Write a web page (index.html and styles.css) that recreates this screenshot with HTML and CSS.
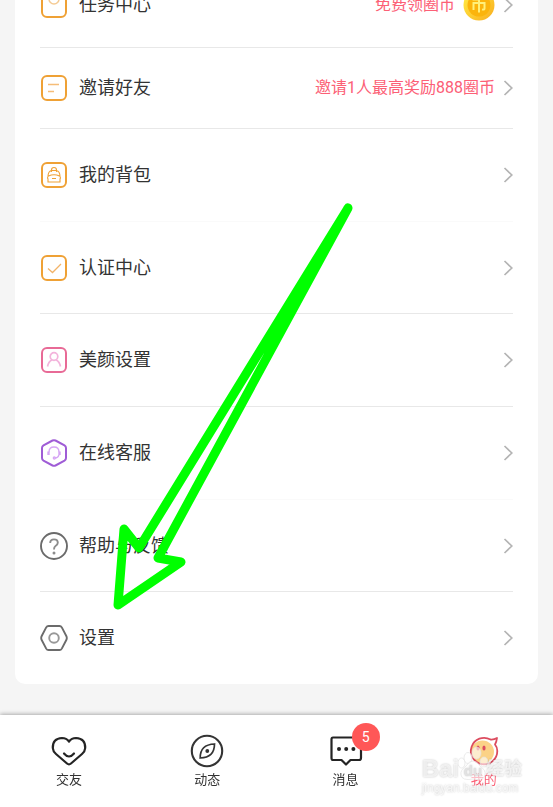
FILE: index.html
```html
<!DOCTYPE html>
<html lang="zh-CN">
<head>
  <meta charset="UTF-8">
  <meta name="viewport" content="width=device-width, initial-scale=1.0">
  <title>我的</title>
  <link rel="stylesheet" href="styles.css">
</head>
<body>

  <!-- Shared chevron -->
  <svg class="defs" aria-hidden="true">
    <symbol id="chevron" viewBox="0 0 10 16">
      <path d="M1.5 1 L8.8 8 L1.5 15" fill="none" stroke="#b4b4b4" stroke-width="1.7"/>
    </symbol>
  </svg>

  <!-- Menu card -->
  <main class="card">
    <a class="row row-first" href="#">
      <svg class="icon" viewBox="0 0 28 28" fill="none" stroke="#efa135" stroke-width="2">
        <rect x="2" y="2" width="24" height="24" rx="5"/>
        <path d="M9 8 a5 5 0 0 0 10 0" stroke="#f5cb94" stroke-width="1.5"/>
      </svg>
      <span class="label">任务中心</span>
      <span class="hint">免费领圈币</span>
      <svg class="coin" viewBox="0 0 32 32">
        <defs>
          <linearGradient id="gold" x1="0" y1="0" x2="1" y2="1">
            <stop offset="0.2" stop-color="#ffe33f"/>
            <stop offset="1" stop-color="#f9ad1e"/>
          </linearGradient>
        </defs>
        <circle cx="16" cy="16" r="15.5" fill="url(#gold)"/>
        <circle cx="16" cy="16" r="11.5" fill="#fbb40c"/>
        <path d="M9.5 10.5 L22.5 9.5 M10.5 21 V14 H21.5 V19.5 Q21.5 21 19 20.5 M16 10 V23.5" fill="none" stroke="#fff07a" stroke-width="2"/>
      </svg>
      <svg class="chevron"><use href="#chevron"/></svg>
    </a>
    <a class="row row-short" href="#">
      <svg class="icon" viewBox="0 0 28 28" fill="none" stroke="#efa135" stroke-width="2">
        <rect x="2" y="2" width="24" height="24" rx="5"/>
        <path d="M8 10.5 H19 M8 17.5 H14" stroke="#f5bd78" stroke-width="1.6"/>
      </svg>
      <span class="label">邀请好友</span>
      <span class="hint">邀请1人最高奖励888圈币</span>
      <svg class="chevron"><use href="#chevron"/></svg>
    </a>
    <a class="row row-faint" href="#">
      <svg class="icon" viewBox="0 0 28 28" fill="none" stroke="#efa135" stroke-width="2">
        <rect x="2" y="2" width="24" height="24" rx="5"/>
        <path d="M8 21 V18 Q7 17 8 15.5 Q8 10 12 9.5 H16 Q20 10 20 15.5 Q21 17 20 18 V21 Z M8.5 15 Q14 12.5 19.5 15 M11.5 11 V9 Q11.5 6.5 14 6.5 T16.5 9 V11 M12 17.5 H16" stroke-width="1.1"/>
      </svg>
      <span class="label">我的背包</span>
      <svg class="chevron"><use href="#chevron"/></svg>
    </a>
    <a class="row row-after" href="#">
      <svg class="icon" viewBox="0 0 28 28" fill="none" stroke="#efa135" stroke-width="2">
        <rect x="2" y="2" width="24" height="24" rx="5"/>
        <path d="M8 14.5 L12.5 18.5 L21 10" stroke="#f2b368" stroke-width="1.3"/>
      </svg>
      <span class="label">认证中心</span>
      <svg class="chevron"><use href="#chevron"/></svg>
    </a>
    <a class="row" href="#">
      <svg class="icon" viewBox="0 0 28 28" fill="none" stroke="#e86a96" stroke-width="2">
        <rect x="2" y="2" width="24" height="24" rx="5"/>
        <g stroke="#f3b4dc" stroke-width="1.7">
          <circle cx="14" cy="10.5" r="3.8"/>
          <path d="M7.5 20.5 Q8.5 15.5 12 14 M20.5 20.5 Q19.5 15.5 16 14"/>
        </g>
      </svg>
      <span class="label">美颜设置</span>
      <svg class="chevron"><use href="#chevron"/></svg>
    </a>
    <a class="row row-faint" href="#">
      <svg class="icon" viewBox="0 0 28 28" fill="none" stroke="#9f5cd6" stroke-width="2">
        <path d="M12.5 1.5 Q14 0.8 15.5 1.5 L24.5 6.3 Q26 7.2 26 9 V19 Q26 20.8 24.5 21.7 L15.5 26.5 Q14 27.2 12.5 26.5 L3.5 21.7 Q2 20.8 2 19 V9 Q2 7.2 3.5 6.3 Z"/>
        <g stroke="#d6a5f5" stroke-width="1.3">
          <path d="M9 13 Q9 8 14 8 T19 13 M19 16 Q18 19 15 19"/>
          <path d="M8.5 12.5 V16 M19.5 12.5 V16" stroke-width="2.4"/>
          <circle cx="14.3" cy="19" r="1"/>
        </g>
      </svg>
      <span class="label">在线客服</span>
      <svg class="chevron"><use href="#chevron"/></svg>
    </a>
    <a class="row row-after" href="#">
      <svg class="icon" viewBox="0 0 28 28" fill="none" stroke="#6b6b6b" stroke-width="1.9">
        <circle cx="14" cy="14" r="13"/>
        <path d="M10.2 11 Q10.2 7.4 14 7.4 T17.8 10.8 Q17.8 12.5 15.5 14 Q14 15 14 17.5" stroke="#8c8c8c"/>
        <circle cx="14" cy="21" r="1.5" fill="#8c8c8c" stroke="none"/>
      </svg>
      <span class="label">帮助与反馈</span>
      <svg class="chevron"><use href="#chevron"/></svg>
    </a>
    <a class="row row-last" href="#">
      <svg class="icon" viewBox="0 0 28 28" fill="none" stroke="#6b6b6b" stroke-width="1.9">
        <path d="M8.5 2 H19.5 Q21 2 21.8 3.4 L26.3 12 Q27.3 14 26.3 16 L21.8 24.6 Q21 26 19.5 26 H8.5 Q7 26 6.2 24.6 L1.7 16 Q0.7 14 1.7 12 L6.2 3.4 Q7 2 8.5 2 Z"/>
        <circle cx="14" cy="14" r="4.8" stroke="#989898"/>
      </svg>
      <span class="label">设置</span>
      <svg class="chevron"><use href="#chevron"/></svg>
    </a>
  </main>

  <!-- Bottom tabs -->
  <nav class="tabs">
    <a class="tab" href="#">
      <svg class="tab-icon" viewBox="0 0 36 36" fill="none" stroke="#242424" stroke-width="2.2" stroke-linecap="round" stroke-linejoin="round">
        <path d="M18 8.5 Q15.5 5 11 5 Q1.5 5.5 1.8 15 Q2 18.5 5 21 L16 30.5 Q18 32.2 20 30.5 L31 21 Q34 18.5 34.2 15 Q34.5 5.5 25 5 Q20.5 5 18 8.5 Z"/>
        <path d="M13 20.5 Q18 26.5 23 20.5"/>
      </svg>
      <span>交友</span>
    </a>
    <a class="tab" href="#">
      <svg class="tab-icon" viewBox="0 0 36 36" fill="none" stroke="#343434" stroke-width="2.1">
        <circle cx="18" cy="18" r="15.2"/>
        <path d="M25.5 11 Q25.5 24.5 11.2 25 Q11 11.5 25.5 11 Z" stroke-width="1.7"/>
        <circle cx="18.3" cy="18" r="1.9" fill="#343434" stroke="none"/>
      </svg>
      <span>动态</span>
    </a>
    <a class="tab" href="#">
      <svg class="tab-icon" viewBox="0 0 36 36" fill="none" stroke="#242424" stroke-width="2.2" stroke-linejoin="round">
        <path d="M5 4.5 H31 Q33 4.5 33 6.5 V25 Q33 27 31 27 H22.5 L18 31.5 L13.5 27 H5 Q3.5 27 3.5 25 V6.5 Q3.5 4.5 5 4.5 Z"/>
        <g fill="#242424" stroke="none">
          <circle cx="11" cy="16" r="2"/>
          <circle cx="18.2" cy="16" r="2"/>
          <circle cx="25.4" cy="16" r="2"/>
        </g>
      </svg>
      <span>消息</span>
      <span class="badge">5</span>
    </a>
    <a class="tab tab-active" href="#">
      <svg class="tab-icon" viewBox="0 0 36 36" fill="none">
        <circle cx="16.5" cy="19" r="11.5" fill="#fbd287"/>
        <path d="M24.5 6.5 Q28 6.8 31 5 Q30.5 9 29 11.5 Q31.5 14.5 31.3 18 A13.2 13.2 0 1 1 24.5 6.5 Z" stroke="#dc4c5f" stroke-width="1.8" stroke-linejoin="round"/>
        <ellipse cx="12" cy="15" rx="1.6" ry="2.6" fill="#dc4c5f"/>
        <ellipse cx="18" cy="15" rx="1.6" ry="2.6" fill="#dc4c5f"/>
      </svg>
      <span>我的</span>
    </a>
  </nav>

  <!-- Watermark -->
  <div class="watermark">
    <div class="brand">
      <span>Bai</span>
      <svg class="paw" viewBox="0 0 32 36">
        <g fill="#fff" fill-opacity="0.6" stroke="#e2e2e2" stroke-opacity="0.7">
          <ellipse cx="4.5" cy="18" rx="3.5" ry="5"/>
          <ellipse cx="11" cy="13" rx="4" ry="5.5"/>
          <ellipse cx="19.5" cy="8" rx="4.5" ry="6"/>
          <ellipse cx="27" cy="17" rx="4" ry="5"/>
          <path d="M16 16 Q20 16 23 21 Q29 25 28 30 Q27 36 16 34 Q5 36 4 30 Q3 25 9 21 Q12 16 16 16 Z"/>
        </g>
        <text class="du" x="16" y="31" text-anchor="middle">du</text>
      </svg>
      <span class="brand-cn">经验</span>
    </div>
    <div class="site">jingyan.baidu.com</div>
  </div>

  <!-- Arrow pointing at 设置 -->
  <svg class="arrow" viewBox="0 0 80 410" aria-hidden="true">
    <path d="M235 5 L26 345 L11 326 L5 402 L68 359 L45 355 Z"/>
  </svg>

</body>
</html>
```

FILE: styles.css
```css
* {
  margin: 0;
  padding: 0;
  box-sizing: border-box;
}
body {
  font-family: Roboto, 'Noto Sans CJK SC', sans-serif;
  background-color: #f5f5f5;
  color: #333;
  min-height: 100vh;
  overflow: hidden;
}
a {
  color: inherit;
  text-decoration: none;
}
.defs {
  position: absolute;
  width: 0;
  height: 0;
}

/* Menu card, scrolled part of the first row out of view */
.card {
  margin: -37px 15px 0;
  padding: 0 25px;
  background-color: #fff;
  border-radius: 10px;
}
.row {
  display: flex;
  align-items: center;
  height: 93px;
  border-bottom: 1px solid #e8e8e8;
}
.row-first {
  height: 85px;
}
.row-short {
  height: 81px;
}
.row-after {
  height: 92px;
}
.row-faint {
  border-bottom-color: #fafafa;
}
.row-last {
  height: 92px;
  border-bottom: none;
}
.icon {
  width: 28px;
  height: 28px;
  margin-right: 11px;
}
.label {
  flex: 1;
  font-size: 18px;
  line-height: 26px;
}
.hint {
  font-size: 16px;
  line-height: 24px;
  color: #fc6076;
}
.coin {
  width: 32px;
  height: 32px;
  margin-left: 8px;
}
.chevron {
  width: 10px;
  height: 16px;
  margin-left: 8px;
}

/* Bottom tabs */
.tabs {
  position: fixed;
  left: 0;
  right: 0;
  bottom: 0;
  display: flex;
  height: 92px;
  padding-top: 18px;
  background-color: #fff;
  box-shadow: 0 -1px 4px rgba(0, 0, 0, 0.3);
}
.tab {
  position: relative;
  flex: 1;
  display: flex;
  flex-direction: column;
  align-items: center;
  font-size: 13px;
  line-height: 22px;
}
.tab-icon {
  width: 36px;
  height: 36px;
}
.tab-active {
  color: #fc6076;
}
.badge {
  position: absolute;
  left: 50%;
  top: -10px;
  width: 28px;
  height: 28px;
  margin-left: 6px;
  border-radius: 50%;
  background-color: #ff5757;
  color: #fff;
  font-size: 14px;
  line-height: 28px;
  text-align: center;
}

/* Watermark */
.watermark {
  position: fixed;
  right: 31px;
  bottom: 12px;
  color: rgba(255, 255, 255, 0.7);
  font-family: 'Liberation Sans', 'Noto Sans CJK SC', sans-serif;
  text-shadow: 0 0 2px rgba(0, 0, 0, 0.25);
  pointer-events: none;
}
.brand {
  display: flex;
  align-items: flex-end;
  font-size: 24px;
  line-height: 24px;
  font-weight: bold;
}
.brand-cn {
  margin-left: -3px;
  font-size: 18px;
}
.paw {
  width: 32px;
  height: 36px;
  margin-left: -2px;
}
.du {
  font-size: 15px;
  fill: #e2e2e2;
}
.site {
  font-size: 12px;
  line-height: 14px;
}

/* Arrow */
.arrow {
  position: absolute;
  left: 113px;
  top: 203px;
  width: 80px;
  height: 410px;
  overflow: visible;
}
.arrow path {
  fill: none;
  stroke: #0f0;
  stroke-width: 9;
  stroke-linecap: round;
  stroke-linejoin: round;
}
```
